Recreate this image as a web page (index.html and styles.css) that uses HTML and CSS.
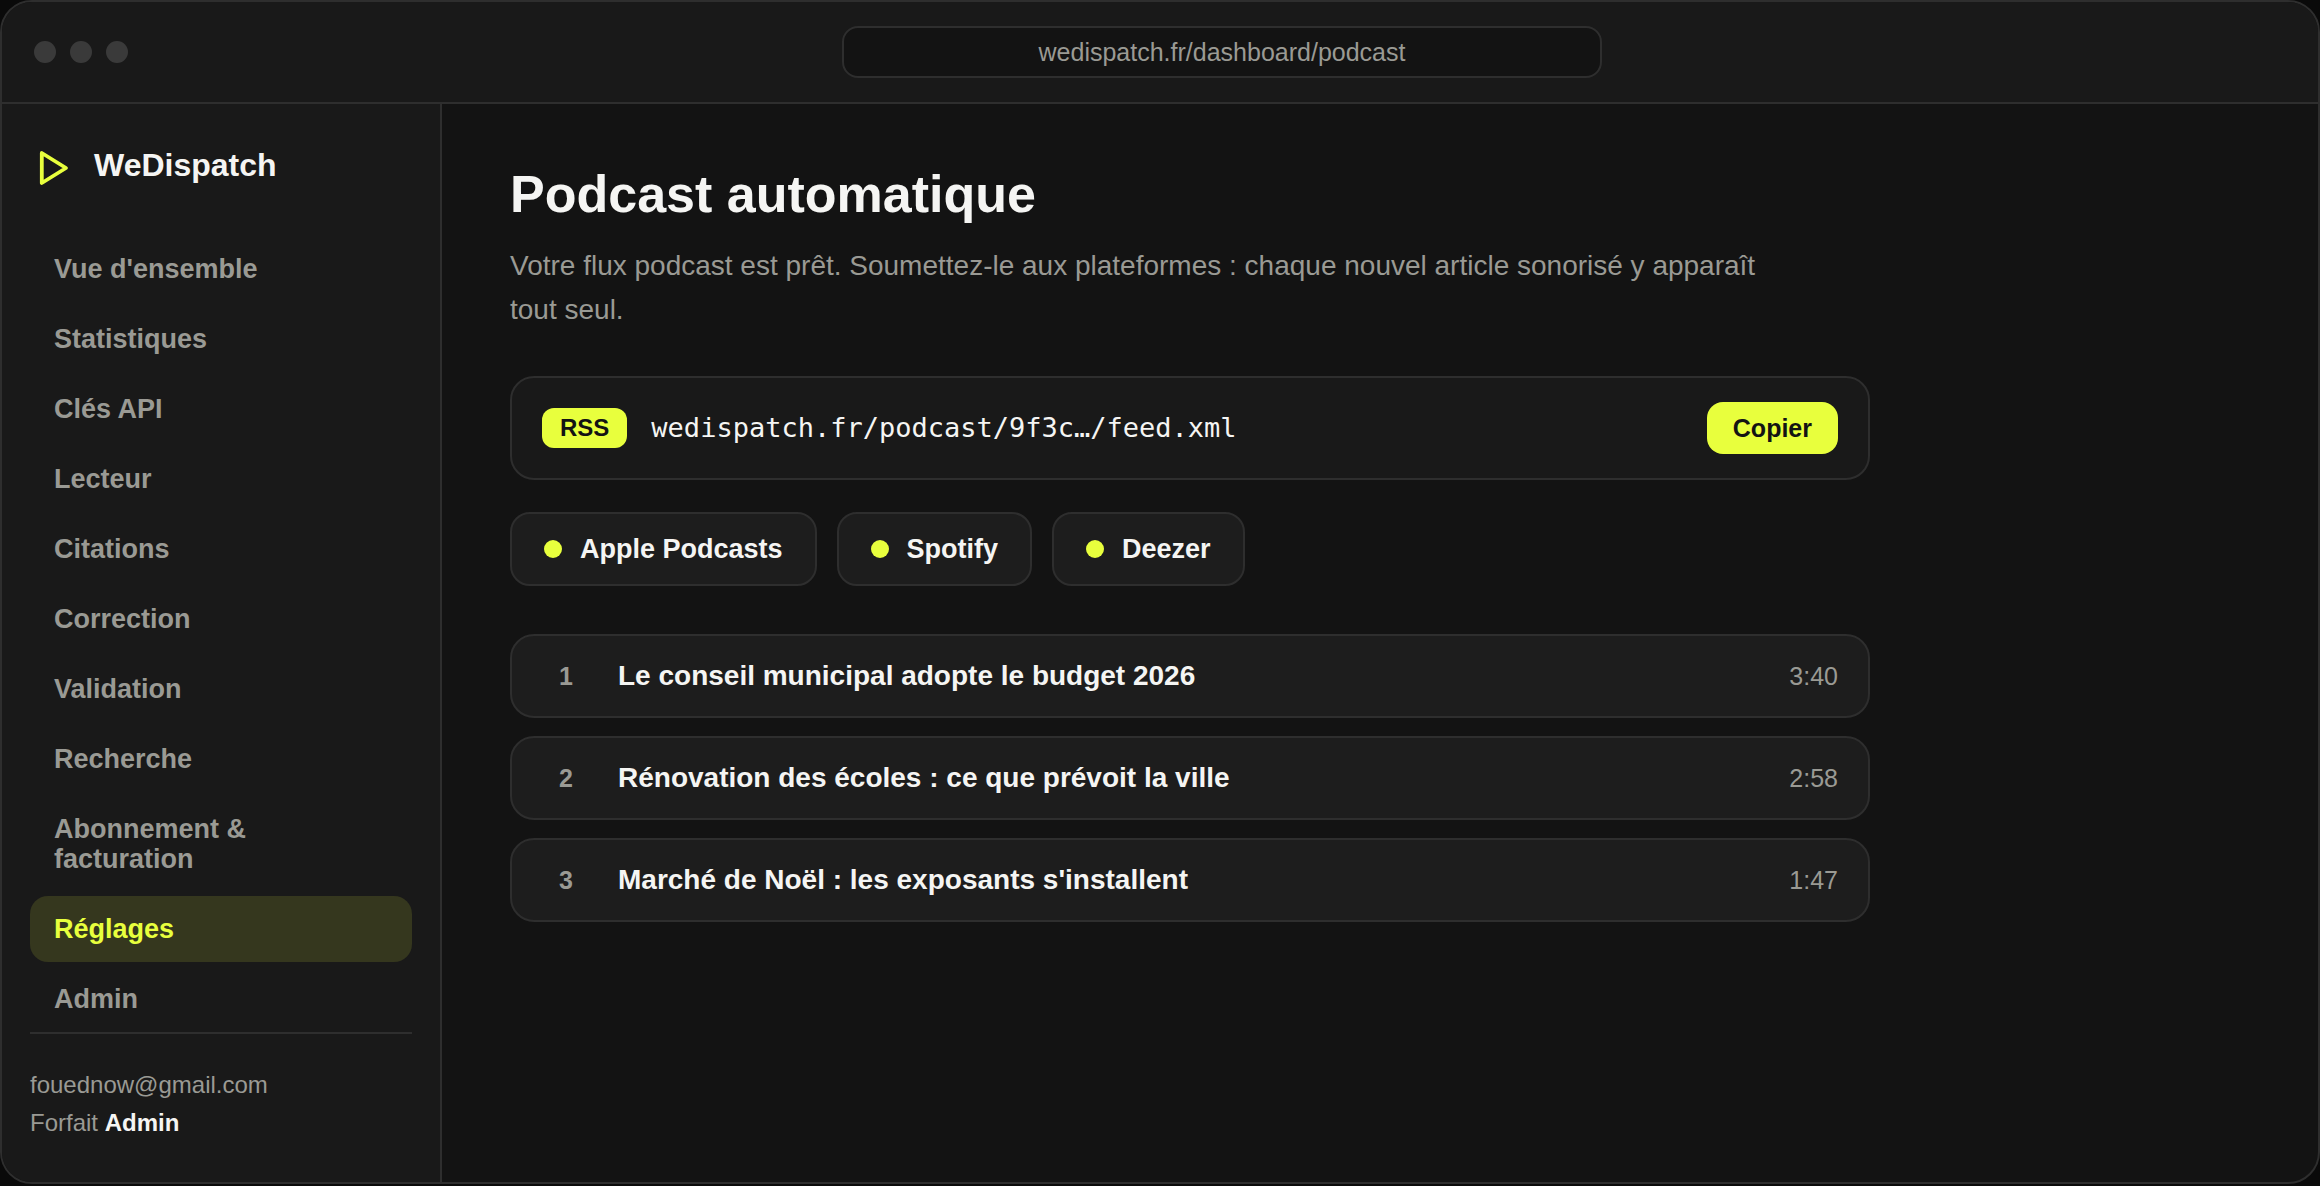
FILE: index.html
```html
<!DOCTYPE html>
<html lang="fr">
<head>
    <meta charset="UTF-8">
    <meta name="viewport" content="width=device-width, initial-scale=1.0">
    <title>WeDispatch - Podcast automatique</title>
    <link rel="stylesheet" href="styles.css">
</head>
<body>
    <div class="window">
        <!-- Barre du navigateur -->
        <header class="topbar">
            <div class="dots">
                <span></span>
                <span></span>
                <span></span>
            </div>
            <div class="address">wedispatch.fr/dashboard/podcast</div>
        </header>

        <div class="layout">
            <!-- Menu latéral -->
            <aside class="sidebar">
                <a class="brand" href="#">
                    <svg class="logo" viewBox="0 0 48 48" fill="none" aria-hidden="true">
                        <path d="M11.8 9 L36 24 L11.8 39 Z" stroke="#e8ff3d" stroke-width="3.8" stroke-linejoin="round"/>
                    </svg>
                    WeDispatch
                </a>
                <nav class="menu">
                    <a href="#">Vue d'ensemble</a>
                    <a href="#">Statistiques</a>
                    <a href="#">Clés API</a>
                    <a href="#">Lecteur</a>
                    <a href="#">Citations</a>
                    <a href="#">Correction</a>
                    <a href="#">Validation</a>
                    <a href="#">Recherche</a>
                    <a href="#">Abonnement &amp;<br>facturation</a>
                    <a href="#" class="active">Réglages</a>
                    <a href="#">Admin</a>
                </nav>
                <div class="account">
                    <div>fouednow@gmail.com</div>
                    <div>Forfait <strong>Admin</strong></div>
                </div>
            </aside>

            <!-- Contenu -->
            <main class="content">
                <h1>Podcast automatique</h1>
                <p class="intro">Votre flux podcast est prêt. Soumettez-le aux plateformes : chaque nouvel article sonorisé y apparaît tout seul.</p>

                <div class="feed">
                    <span class="tag">RSS</span>
                    <span class="feed-url">wedispatch.fr/podcast/9f3c…/feed.xml</span>
                    <button type="button" class="copy">Copier</button>
                </div>

                <div class="platforms">
                    <div class="platform">Apple Podcasts</div>
                    <div class="platform">Spotify</div>
                    <div class="platform">Deezer</div>
                </div>

                <!-- Episodes -->
                <div class="episodes">
                    <div class="episode">
                        <span class="number">1</span>
                        <span class="title">Le conseil municipal adopte le budget 2026</span>
                        <span class="time">3:40</span>
                    </div>
                    <div class="episode">
                        <span class="number">2</span>
                        <span class="title">Rénovation des écoles : ce que prévoit la ville</span>
                        <span class="time">2:58</span>
                    </div>
                    <div class="episode">
                        <span class="number">3</span>
                        <span class="title">Marché de Noël : les exposants s'installent</span>
                        <span class="time">1:47</span>
                    </div>
                </div>
            </main>
        </div>
    </div>
</body>
</html>
```
FILE: styles.css
```css
* {
    box-sizing: border-box;
}
body {
    margin: 0;
    background-color: #0a0a0a;
    color: #f5f5f3;
    font-family: "Liberation Sans", Arial, sans-serif;
    font-size: 27px;
    line-height: 30px;
}
a {
    color: inherit;
    text-decoration: none;
}
.window {
    border: 2px solid #2e2e2e;
    border-radius: 32px;
    background-color: #131313;
    overflow: hidden;
}

/* Barre du navigateur */
.topbar {
    display: flex;
    align-items: center;
    gap: 30px;
    padding: 24px 32px;
    background-color: #191919;
    border-bottom: 2px solid #2e2e2e;
}
.dots {
    display: flex;
    gap: 14px;
}
.dots span {
    width: 22px;
    height: 22px;
    border-radius: 50%;
    background-color: #3a3a3a;
}
.address {
    flex: 1;
    max-width: 760px;
    margin: 0 auto;
    padding: 10px 24px;
    border: 2px solid #2e2e2e;
    border-radius: 16px;
    background-color: #131313;
    color: #9a9a94;
    font-size: 25px;
    line-height: 28px;
    text-align: center;
}

.layout {
    display: flex;
}

/* Menu latéral */
.sidebar {
    display: flex;
    flex-direction: column;
    flex: 0 0 440px;
    padding: 40px 28px;
    background-color: #191919;
    border-right: 2px solid #2e2e2e;
}
.brand {
    display: flex;
    align-items: flex-start;
    gap: 16px;
    margin-bottom: 44px;
    font-size: 32px;
    font-weight: bold;
    line-height: 42px;
}
.logo {
    width: 48px;
    height: 48px;
}
.menu {
    display: flex;
    flex-direction: column;
    gap: 4px;
}
.menu a {
    padding: 18px 24px;
    border-radius: 18px;
    color: #9a9a94;
    font-weight: bold;
}
.menu a.active {
    background-color: #35371e;
    color: #e8ff3d;
}
.account {
    margin-top: auto;
    padding-top: 32px;
    border-top: 2px solid #2e2e2e;
    color: #9a9a94;
    font-size: 24px;
    line-height: 38px;
}
.account strong {
    color: #f5f5f3;
}

/* Contenu */
.content {
    flex: 1;
    padding: 60px 68px;
}
h1 {
    margin: 0 0 20px;
    font-size: 52px;
    line-height: 60px;
}
.intro {
    max-width: 1280px;
    margin: 0 0 44px;
    color: #9a9a94;
    font-size: 28px;
    line-height: 44px;
}
.feed {
    display: flex;
    align-items: center;
    gap: 24px;
    max-width: 1360px;
    padding: 24px 30px;
    border: 2px solid #2e2e2e;
    border-radius: 24px;
    background-color: #191919;
}
.tag {
    padding: 6px 18px;
    border-radius: 12px;
    background-color: #e8ff3d;
    color: #131313;
    font-size: 24px;
    font-weight: bold;
    line-height: 28px;
}
.feed-url {
    flex: 1;
    font-family: "DejaVu Sans Mono", monospace;
}
.copy {
    padding: 12px 26px;
    border: none;
    border-radius: 16px;
    background-color: #e8ff3d;
    color: #131313;
    font-family: inherit;
    font-size: 25px;
    font-weight: bold;
    line-height: 28px;
    cursor: pointer;
}
.platforms {
    display: flex;
    flex-wrap: wrap;
    gap: 20px;
    margin: 32px 0 48px;
}
.platform {
    display: flex;
    align-items: center;
    gap: 18px;
    padding: 20px 32px;
    border: 2px solid #2e2e2e;
    border-radius: 20px;
    background-color: #1d1d1d;
    font-weight: bold;
}
.platform::before {
    content: "";
    width: 18px;
    height: 18px;
    border-radius: 50%;
    background-color: #e8ff3d;
}
.episodes {
    display: flex;
    flex-direction: column;
    gap: 18px;
    max-width: 1360px;
}
.episode {
    display: flex;
    align-items: center;
    gap: 28px;
    padding: 24px 30px;
    border: 2px solid #2e2e2e;
    border-radius: 24px;
    background-color: #1d1d1d;
}
.number {
    width: 48px;
    color: #9a9a94;
    font-size: 25px;
    font-weight: bold;
    line-height: 28px;
    text-align: center;
}
.title {
    flex: 1;
    font-size: 28px;
    font-weight: bold;
    line-height: 32px;
}
.time {
    color: #9a9a94;
    font-size: 25px;
    line-height: 28px;
}
```
